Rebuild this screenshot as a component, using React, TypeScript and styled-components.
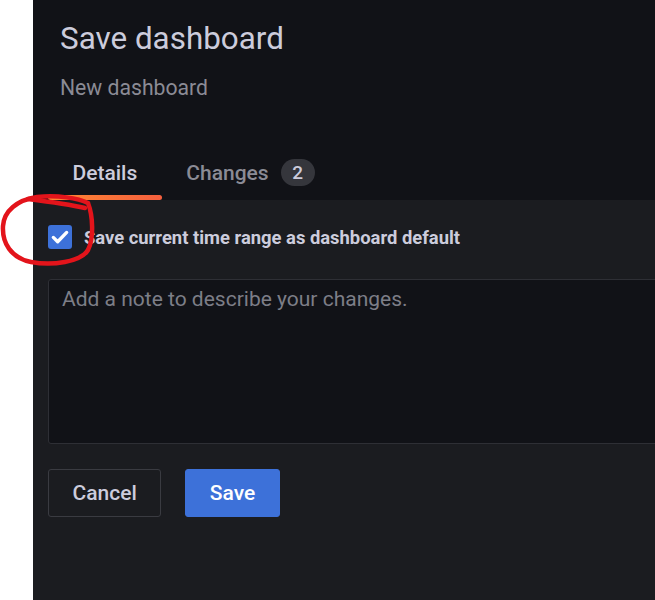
import styled, { createGlobalStyle } from 'styled-components';

const GlobalStyle = createGlobalStyle`
  html, body {
    margin: 0;
    padding: 0;
    background: #ffffff;
    overflow: hidden;
  }
  body {
    font-family: Roboto, "Noto Sans", sans-serif;
  }
`;

const Page = styled.div`
  position: relative;
  width: 655px;
  height: 600px;
  overflow: hidden;
`;

const Drawer = styled.div`
  margin-left: 33px;
  width: 700px;
  height: 600px;
  display: flex;
  flex-direction: column;
  background: #111217;
`;

const Header = styled.div`
  display: flex;
  flex-direction: column;
  padding: 21px 27px 0;
`;

const Title = styled.h2`
  margin: 0;
  font-size: 31.4px;
  line-height: 36px;
  font-weight: 400;
  color: #ccccdc;
`;

const Subtitle = styled.div`
  margin-top: 19px;
  font-size: 21.2px;
  line-height: 24px;
  color: #8b8b95;
`;

const TabBar = styled.div`
  display: flex;
  margin-top: 47px;
  padding: 0 15px;
`;

const Tab = styled.div<{ $active?: boolean }>`
  position: relative;
  display: flex;
  align-items: center;
  padding: 12px 24.5px 14px;
  font-size: 21px;
  line-height: 24px;
  font-weight: 500;
  color: ${({ $active }) => ($active ? '#ccccdc' : '#8b8b95')};

  &::after {
    content: '';
    display: ${({ $active }) => ($active ? 'block' : 'none')};
    position: absolute;
    left: 0;
    right: 0;
    bottom: 0;
    height: 5px;
    border-radius: 3px;
    background: linear-gradient(270deg, #f55f3e 0%, #ff8833 100%);
  }
`;

const Counter = styled.span`
  display: inline-flex;
  align-items: center;
  justify-content: center;
  margin-left: 12px;
  min-width: 34px;
  height: 27px;
  border-radius: 14px;
  background: #35363c;
  color: #ccccdc;
  font-size: 19px;
  font-weight: 500;
`;

const Content = styled.div`
  flex: 1;
  display: flex;
  flex-direction: column;
  padding: 25px 15px;
  background: #1b1c20;
`;

const CheckRow = styled.label`
  display: flex;
  align-items: center;
  gap: 12px;
  font-size: 18.4px;
  font-weight: 700;
  color: #ccccdc;
`;

const CheckBox = styled.span`
  display: flex;
  align-items: center;
  justify-content: center;
  width: 24px;
  height: 24px;
  border-radius: 3px;
  background: #3d71d9;
`;

const NoteBox = styled.div`
  margin-top: 30px;
  height: 165px;
  box-sizing: border-box;
  padding: 5px 13px;
  border: 1px solid #2e2f35;
  border-radius: 3px;
  background: #111217;
  font-size: 21px;
  line-height: 28px;
  color: #7d7e87;
`;

const Actions = styled.div`
  display: flex;
  gap: 24px;
  margin-top: 25px;
`;

const Button = styled.button<{ $primary?: boolean }>`
  height: 48px;
  padding: 0 23.5px;
  border-radius: 3px;
  border: 1px solid ${({ $primary }) => ($primary ? '#3d71d9' : '#3a3b41')};
  background: ${({ $primary }) => ($primary ? '#3d71d9' : 'transparent')};
  color: ${({ $primary }) => ($primary ? '#ffffff' : '#ccccdc')};
  font-family: Roboto, "Noto Sans", sans-serif;
  font-size: 21px;
  font-weight: 500;
`;

const Annotation = styled.svg`
  position: absolute;
  left: 0;
  top: 0;
  pointer-events: none;
`;

export default function App() {
  return (
    <Page>
      <GlobalStyle />
      <Drawer>
        <Header>
          <Title>Save dashboard</Title>
          <Subtitle>New dashboard</Subtitle>
        </Header>
        <TabBar>
          <Tab $active>Details</Tab>
          <Tab>
            Changes <Counter>2</Counter>
          </Tab>
        </TabBar>
        <Content>
          <CheckRow>
            <CheckBox>
              <svg width="20" height="20" viewBox="0 0 24 24">
                <path d="M4 12.5l5.2 5.2L20 6.5" fill="none" stroke="#ffffff" strokeWidth="4" strokeLinecap="round" strokeLinejoin="round" />
              </svg>
            </CheckBox>
            Save current time range as dashboard default
          </CheckRow>
          <NoteBox>Add a note to describe your changes.</NoteBox>
          <Actions>
            <Button>Cancel</Button>
            <Button $primary>Save</Button>
          </Actions>
        </Content>
      </Drawer>
      <Annotation width="120" height="280" viewBox="0 0 120 280">
        <g fill="none" stroke="#e3141b" strokeWidth="4.5" strokeLinecap="round" strokeLinejoin="round">
          <path d="M28 199 C52 202 72 205 85 208" />
          <path d="M88 203 C93 216 94 238 88 250 C81 262 52 266 31 262 C11 258 2 243 3 226 C4 211 17 200 37 197 C58 195 78 198 88 203" />
        </g>
      </Annotation>
    </Page>
  );
}
